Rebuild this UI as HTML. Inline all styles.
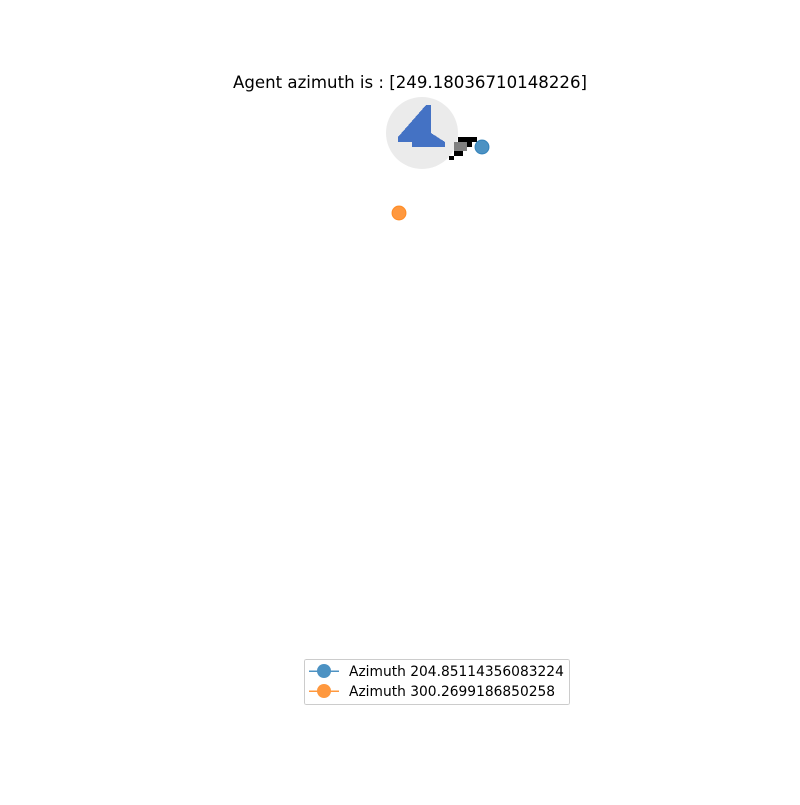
<!DOCTYPE html>
<html><head><style>
body{margin:0;background:#fff;width:800px;height:800px;overflow:hidden;}
</style></head><body>
<svg width="800" height="800" xmlns="http://www.w3.org/2000/svg" font-family="DejaVu Sans, Liberation Sans, sans-serif" shape-rendering="crispEdges">
<text x="410" y="88" font-size="16.6" text-anchor="middle" fill="#000">Agent azimuth is : [249.18036710148226]</text>
<circle cx="422" cy="133" r="36" fill="#ebebeb" shape-rendering="auto"/>
<polygon points="426,105 431,105 431,133 445,142 445,147 412,147 412,142 398,142 398,137" fill="#4472c4"/>
<rect x="458" y="137" width="19" height="5" fill="#000"/>
<rect x="463" y="142" width="9" height="5" fill="#000"/>
<rect x="454" y="142" width="13" height="9" fill="#808080"/>
<rect x="454" y="151" width="9" height="5" fill="#000"/>
<rect x="449" y="156" width="5" height="4" fill="#000"/>
<circle cx="482" cy="147" r="7" fill="#4c92c3" stroke="#1f77b4" stroke-opacity="0.8" shape-rendering="auto"/>
<circle cx="399" cy="213" r="7" fill="#ff983e" stroke="#ff7f0e" stroke-opacity="0.8" shape-rendering="auto"/>
<rect x="304.5" y="659.5" width="265" height="45" rx="2" fill="#fff" stroke="#ccc"/>
<line x1="309" y1="671" x2="339" y2="671" stroke="#4c92c3" stroke-width="1.5"/>
<circle cx="324" cy="671" r="7" fill="#4c92c3" shape-rendering="auto"/>
<line x1="309" y1="691" x2="339" y2="691" stroke="#ff983e" stroke-width="1.5"/>
<circle cx="324" cy="691" r="7" fill="#ff983e" shape-rendering="auto"/>
<text x="349" y="676" font-size="13.8" fill="#000">Azimuth 204.85114356083224</text>
<text x="349" y="696" font-size="13.8" fill="#000">Azimuth 300.2699186850258</text>
</svg>
</body></html>
